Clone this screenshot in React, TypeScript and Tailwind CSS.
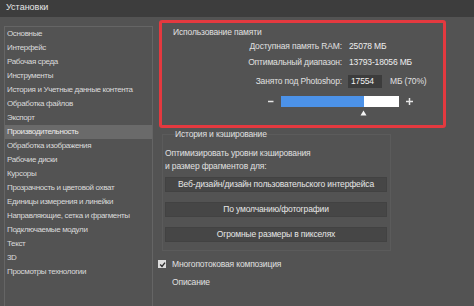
const sections = [
  "Основные",
  "Интерфейс",
  "Рабочая среда",
  "Инструменты",
  "История и Учетные данные контента",
  "Обработка файлов",
  "Экспорт",
  "Производительность",
  "Обработка изображения",
  "Рабочие диски",
  "Курсоры",
  "Прозрачность и цветовой охват",
  "Единицы измерения и линейки",
  "Направляющие, сетка и фрагменты",
  "Подключаемые модули",
  "Текст",
  "3D",
  "Просмотры технологии",
];

const cacheButtons = [
  "Веб-дизайн/дизайн пользовательского интерфейса",
  "По умолчанию/фотографии",
  "Огромные размеры в пикселях",
];

export default function App() {
  const selected = "Производительность";
  const used = 70;

  return (
    <div className="w-[474px] h-[306px] overflow-hidden bg-[#535353] text-[#e0e0e0] flex flex-col font-['Liberation_Sans',sans-serif]">
      {/* заголовок окна */}
      <div className="h-[17px] shrink-0 bg-[#3d3d3d] pl-[6px] text-[9px] leading-[15px] text-[#e6e6e6]">
        Установки
      </div>

      <div className="flex flex-1 min-h-0">
        {/* список разделов */}
        <div className="w-[153px] shrink-0 pl-[4px] pt-[9px] flex flex-col">
          <div className="flex-1 border-t border-l border-r border-[#656565]">
            {sections.map((name) => (
              <div
                key={name}
                className={
                  "h-[14px] leading-[14px] pl-[2px] text-[8px] tracking-[-0.35px] whitespace-nowrap " +
                  (name === selected ? "bg-[#6a6a6a] text-[#ebebeb]" : "text-[#dadada]")
                }
              >
                {name}
              </div>
            ))}
          </div>
        </div>

        <div className="flex-1 flex flex-col text-[8.5px] tracking-[-0.15px]">
          {/* использование памяти */}
          <div className="ml-[6px] mt-[3px] w-[287px] h-[108px] shrink-0 border-[3px] border-[#e4393f] rounded-[3px] flex flex-col">
            <div className="h-[18px] pl-[11px] flex items-center">Использование памяти</div>
            <div className="h-[11px] flex items-center">
              <span className="w-[180px] text-right">Доступная память RAM:</span>
              <span className="ml-[7px] text-[#eeeeee]">25078 МБ</span>
            </div>
            <div className="mt-[4px] h-[12px] flex items-center">
              <span className="w-[180px] text-right">Оптимальный диапазон:</span>
              <span className="ml-[7px] text-[#eeeeee]">13793-18056 МБ</span>
            </div>
            <div className="mt-[7px] h-[13px] flex items-center">
              <span className="w-[180px] text-right">Занято под Photoshop:</span>
              <span className="ml-[6px] w-[34px] h-[13px] bg-[#3c3c3c] pl-[3px] leading-[13px] text-[#f2f2f2]">
                17554
              </span>
              <span className="ml-[8px]">МБ (70%)</span>
            </div>
            <div className="mt-[8px] h-[11px] flex items-center pl-[104px]">
              <svg width="10" height="11" viewBox="0 0 10 11">
                <line x1="2" y1="5.5" x2="7.5" y2="5.5" stroke="#e6e6e6" strokeWidth="1.5" />
              </svg>
              <div className="ml-[5px] w-[118px] h-[11px] bg-white flex">
                <div className="h-full bg-[#4c92e8]" style={{ width: `${used}%` }} />
              </div>
              <svg className="ml-[6px]" width="9" height="9" viewBox="0 0 9 9">
                <line x1="1" y1="4.5" x2="8" y2="4.5" stroke="#e6e6e6" strokeWidth="1.5" />
                <line x1="4.5" y1="1" x2="4.5" y2="8" stroke="#e6e6e6" strokeWidth="1.5" />
              </svg>
            </div>
            <div className="mt-[3px] pl-[198px]">
              <svg width="7" height="6" viewBox="0 0 7 6">
                <path d="M3.5 0.5 L6.5 5.5 L0.5 5.5 Z" fill="#f4f4f4" />
              </svg>
            </div>
          </div>

          {/* история и кэширование */}
          <fieldset className="ml-[9px] mt-[1px] w-[229px] shrink-0 border border-[#5b5b5b] px-[2px] pb-[8px]">
            <legend className="ml-[10px] leading-[10px]">История и кэширование</legend>
            <div className="mt-[8px] leading-[13px]">
              Оптимизировать уровни кэширования
              <br />и размер фрагментов для:
            </div>
            <div className="mt-[4px] flex flex-col gap-[10px]">
              {cacheButtons.map((label) => (
                <div
                  key={label}
                  className="w-[222px] h-[15px] bg-[#464646] border border-[#424242] text-center leading-[13px] text-[#e6e6e6]"
                >
                  {label}
                </div>
              ))}
            </div>
          </fieldset>

          <div className="ml-[5px] mt-[7px] h-[12px] flex items-center">
            <div className="w-[8px] h-[8px] bg-[#dcdcdc] flex items-center justify-center">
              <svg width="7" height="7" viewBox="0 0 7 7">
                <path d="M1.2 3.6 L3 5.4 L6 1.6" fill="none" stroke="#2a2a2a" strokeWidth="1.4" />
              </svg>
            </div>
            <span className="ml-[6px]">Многопотоковая композиция</span>
          </div>
          <div className="ml-[19px] mt-[6px] h-[12px] flex items-center">Описание</div>
        </div>
      </div>
    </div>
  );
}
